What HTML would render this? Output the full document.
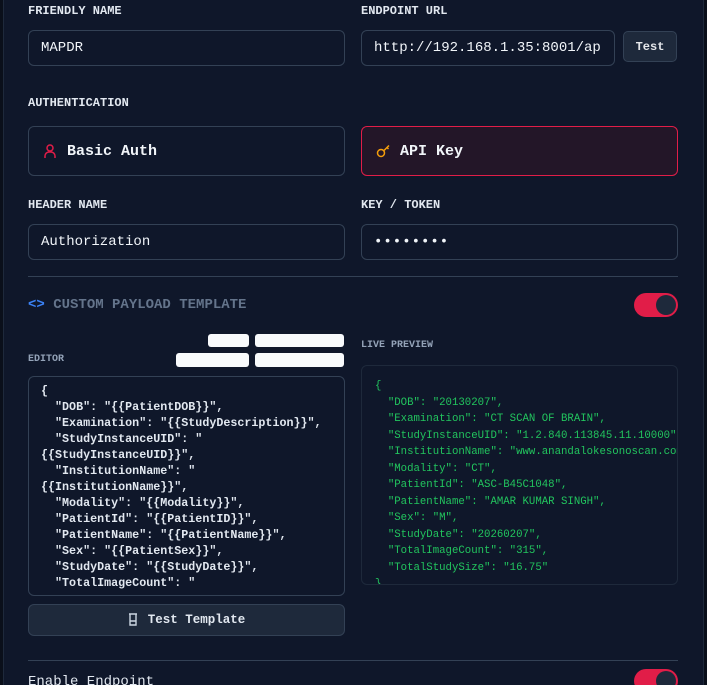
<!DOCTYPE html>
<html style="width:707px;height:685px;overflow:hidden"><head><style>
*{box-sizing:border-box;margin:0;padding:0}
body{width:707px;height:685px;background:#0a0f1a;overflow:hidden;font-family:"Liberation Mono",monospace;color:#e5e7eb;position:relative}
.modal{position:absolute;left:3px;top:-12px;width:701px;height:710px;background:#0f172a;border:1px solid #1e293b;border-radius:12px}
.a{position:absolute}
.lbl{font-size:12px;font-weight:bold;color:#e2e8f0;letter-spacing:0}
.inp{border:1px solid #334155;border-radius:6px;background:#0f172a;font-size:14px;color:#f1f5f9;padding-left:12px;display:flex;align-items:center}
.card{border:1px solid #334155;border-radius:6px;display:flex;align-items:center;padding-left:14px;font-size:15px;font-weight:bold;color:#f1f5f9}
.tog{width:44px;height:24px;border-radius:12px;background:#e11d48}
.tog:after{content:"";position:absolute;right:2px;top:2px;width:20px;height:20px;border-radius:50%;background:#1e293b}
.wb{background:#f8fafc;border-radius:3px}
pre{font-family:"Liberation Mono",monospace}
</style></head><body>
<div class="modal"></div>
<div class="a lbl" style="left:28px;top:4px">FRIENDLY NAME</div>
<div class="a lbl" style="left:361px;top:4px">ENDPOINT URL</div>
<div class="a inp" style="left:28px;top:30px;width:317px;height:36px">MAPDR</div>
<div class="a inp" style="left:361px;top:30px;width:254px;height:36px;overflow:hidden;white-space:nowrap">http://192.168.1.35:8001/ap</div>
<div class="a" style="left:623px;top:31px;width:54px;height:31px;background:#1e293b;border:1px solid #334155;border-radius:5px;font-size:12px;font-weight:bold;display:flex;align-items:center;justify-content:center">Test</div>
<div class="a lbl" style="left:28px;top:96px">AUTHENTICATION</div>
<div class="a card" style="left:28px;top:126px;width:317px;height:50px"><svg width="14" height="16" viewBox="0 0 14 16" style="margin-right:10px"><circle cx="7" cy="5" r="3" fill="none" stroke="#e11d48" stroke-width="1.5"/><path d="M2 15v-2a4 4 0 0 1 4-4h2a4 4 0 0 1 4 4v2" fill="none" stroke="#e11d48" stroke-width="1.5"/></svg>Basic Auth</div>
<div class="a card" style="left:361px;top:126px;width:317px;height:50px;border-color:#e11d48;background:#231628"><svg width="16" height="14" viewBox="0 0 16 14" style="margin-right:8px"><circle cx="5" cy="9" r="3.5" fill="none" stroke="#f59e0b" stroke-width="1.5"/><path d="M8 6.5L13 1.5M11 3.5l1.5 1.5" fill="none" stroke="#f59e0b" stroke-width="1.5"/></svg>API Key</div>
<div class="a lbl" style="left:28px;top:198px">HEADER NAME</div>
<div class="a lbl" style="left:361px;top:198px">KEY / TOKEN</div>
<div class="a inp" style="left:28px;top:224px;width:317px;height:36px">Authorization</div>
<div class="a inp" style="left:361px;top:224px;width:317px;height:36px;letter-spacing:1px">••••••••</div>
<div class="a" style="left:28px;top:276px;width:650px;height:1px;background:#334155"></div>
<div class="a" style="left:28px;top:297px;font-size:14px;font-weight:bold;color:#64748b"><span style="color:#3b82f6">&lt;&gt;</span> CUSTOM PAYLOAD TEMPLATE</div>
<div class="a tog" style="left:634px;top:293px"></div>
<div class="a wb" style="left:208px;top:334px;width:41px;height:13px"></div>
<div class="a wb" style="left:255px;top:334px;width:89px;height:13px"></div>
<div class="a wb" style="left:176px;top:353px;width:73px;height:14px"></div>
<div class="a wb" style="left:255px;top:353px;width:89px;height:14px"></div>
<div class="a" style="left:28px;top:354px;font-size:10px;font-weight:bold;color:#94a3b8">EDITOR</div>
<div class="a" style="left:361px;top:340px;font-size:10px;font-weight:bold;color:#94a3b8">LIVE PREVIEW</div>
<div class="a" style="left:28px;top:376px;width:317px;height:220px;border:1px solid #334155;border-radius:6px;overflow:hidden;padding:6px 0 0 12px"><pre style="font-size:11.7px;line-height:16px;color:#e2e8f0;font-weight:bold">{
  "DOB": "{{PatientDOB}}",
  "Examination": "{{StudyDescription}}",
  "StudyInstanceUID": "
{{StudyInstanceUID}}",
  "InstitutionName": "
{{InstitutionName}}",
  "Modality": "{{Modality}}",
  "PatientId": "{{PatientID}}",
  "PatientName": "{{PatientName}}",
  "Sex": "{{PatientSex}}",
  "StudyDate": "{{StudyDate}}",
  "TotalImageCount": "</pre></div>
<div class="a" style="left:361px;top:365px;width:317px;height:220px;border:1px solid #1e293b;border-radius:6px;overflow:hidden;padding:12px 0 0 13px;background:#0f172a"><pre style="font-size:10.7px;line-height:16.5px;color:#22c55e">{
  "DOB": "20130207",
  "Examination": "CT SCAN OF BRAIN",
  "StudyInstanceUID": "1.2.840.113845.11.10000",
  "InstitutionName": "www.anandalokesonoscan.com",
  "Modality": "CT",
  "PatientId": "ASC-B45C1048",
  "PatientName": "AMAR KUMAR SINGH",
  "Sex": "M",
  "StudyDate": "20260207",
  "TotalImageCount": "315",
  "TotalStudySize": "16.75"
}</pre></div>
<div class="a" style="left:28px;top:604px;width:317px;height:32px;background:#1e293b;border:1px solid #334155;border-radius:6px;display:flex;align-items:center;justify-content:center;font-size:12.5px;font-weight:bold;color:#e2e8f0"><svg width="10" height="14" viewBox="0 0 10 14" style="margin-right:10px"><path d="M1 1h8M2 1v11h6V1M2 8h6" fill="none" stroke="#cbd5e1" stroke-width="1.4"/></svg>Test Template</div>
<div class="a" style="left:28px;top:660px;width:650px;height:1px;background:#334155"></div>
<div class="a" style="left:28px;top:674px;font-size:14px;color:#e2e8f0">Enable Endpoint</div>
<div class="a tog" style="left:634px;top:669px"></div>
</body></html>
